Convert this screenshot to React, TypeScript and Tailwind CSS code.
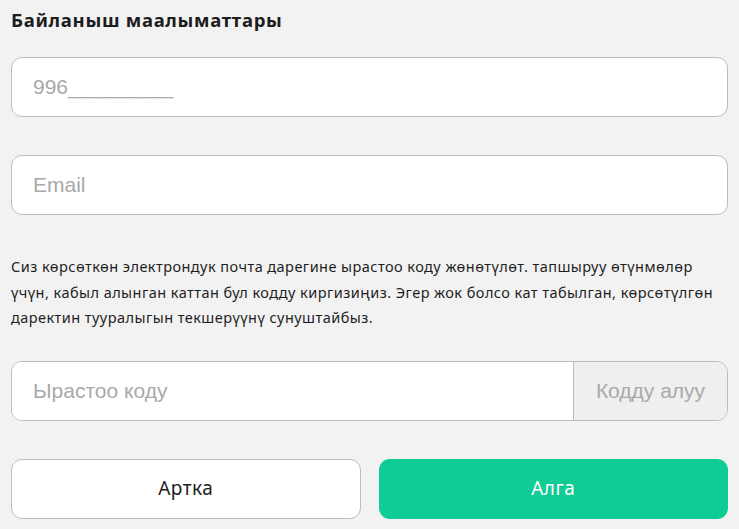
import { useState } from 'react';

export default function App() {
  const [phone, setPhone] = useState('');
  const [email, setEmail] = useState('');
  const [code, setCode] = useState('');

  return (
    <div className="min-h-[529px] w-full bg-[#f2f2f2] px-[11px] pt-[6px] font-['Noto_Sans',sans-serif] text-[#1d1d1d]">
      <h2 className="text-[18.5px] font-bold leading-[28px] tracking-[0.7px]">Байланыш маалыматтары</h2>

      {/* Contact inputs */}
      <div className="mt-[23px] flex flex-col gap-[38px]">
        <input
          value={phone}
          onChange={(e) => setPhone(e.target.value)}
          placeholder="996_________"
          className="h-[60px] w-full rounded-[11px] border border-[#bdbdbd] bg-white px-[21px] font-['Liberation_Sans',sans-serif] text-[21px] outline-none placeholder:text-[#a9a9a9]"
        />
        <input
          value={email}
          onChange={(e) => setEmail(e.target.value)}
          placeholder="Email"
          className="h-[60px] w-full rounded-[11px] border border-[#bdbdbd] bg-white px-[21px] font-['Liberation_Sans',sans-serif] text-[21px] outline-none placeholder:text-[#a9a9a9]"
        />
      </div>

      <p className="mt-[39px] text-[14.5px] leading-[25.5px] tracking-[0.45px] text-[#1e1e1e]">
        Сиз көрсөткөн электрондук почта дарегине ырастоо коду жөнөтүлөт. тапшыруу өтүнмөлөр
        <br />
        үчүн, кабыл алынган каттан бул кодду киргизиңиз. Эгер жок болсо кат табылган, көрсөтүлгөн
        <br />
        даректин тууралыгын текшерүүнү сунуштайбыз.
      </p>

      {/* Verification code */}
      <div className="mt-[30px] flex h-[60px] overflow-hidden rounded-[11px] border border-[#bdbdbd] bg-white">
        <input
          value={code}
          onChange={(e) => setCode(e.target.value)}
          placeholder="Ырастоо коду"
          className="min-w-0 flex-1 bg-white px-[21px] font-['Liberation_Sans',sans-serif] text-[21px] outline-none placeholder:text-[#a9a9a9]"
        />
        <button
          type="button"
          className="w-[154px] border-l border-[#bdbdbd] bg-[#efefef] font-['Liberation_Sans',sans-serif] text-[21px] text-[#a9a9a9]"
        >
          Кодду алуу
        </button>
      </div>

      <div className="mt-[38px] grid grid-cols-2 gap-[18px]">
        <button
          type="button"
          className="h-[60px] rounded-[11px] border border-[#bdbdbd] bg-white text-[19px] tracking-[0.5px] text-[#222]"
        >
          Артка
        </button>
        <button
          type="button"
          className="h-[60px] rounded-[11px] bg-[#0fcb94] text-[19px] tracking-[0.5px] text-white"
        >
          Алга
        </button>
      </div>
    </div>
  );
}
